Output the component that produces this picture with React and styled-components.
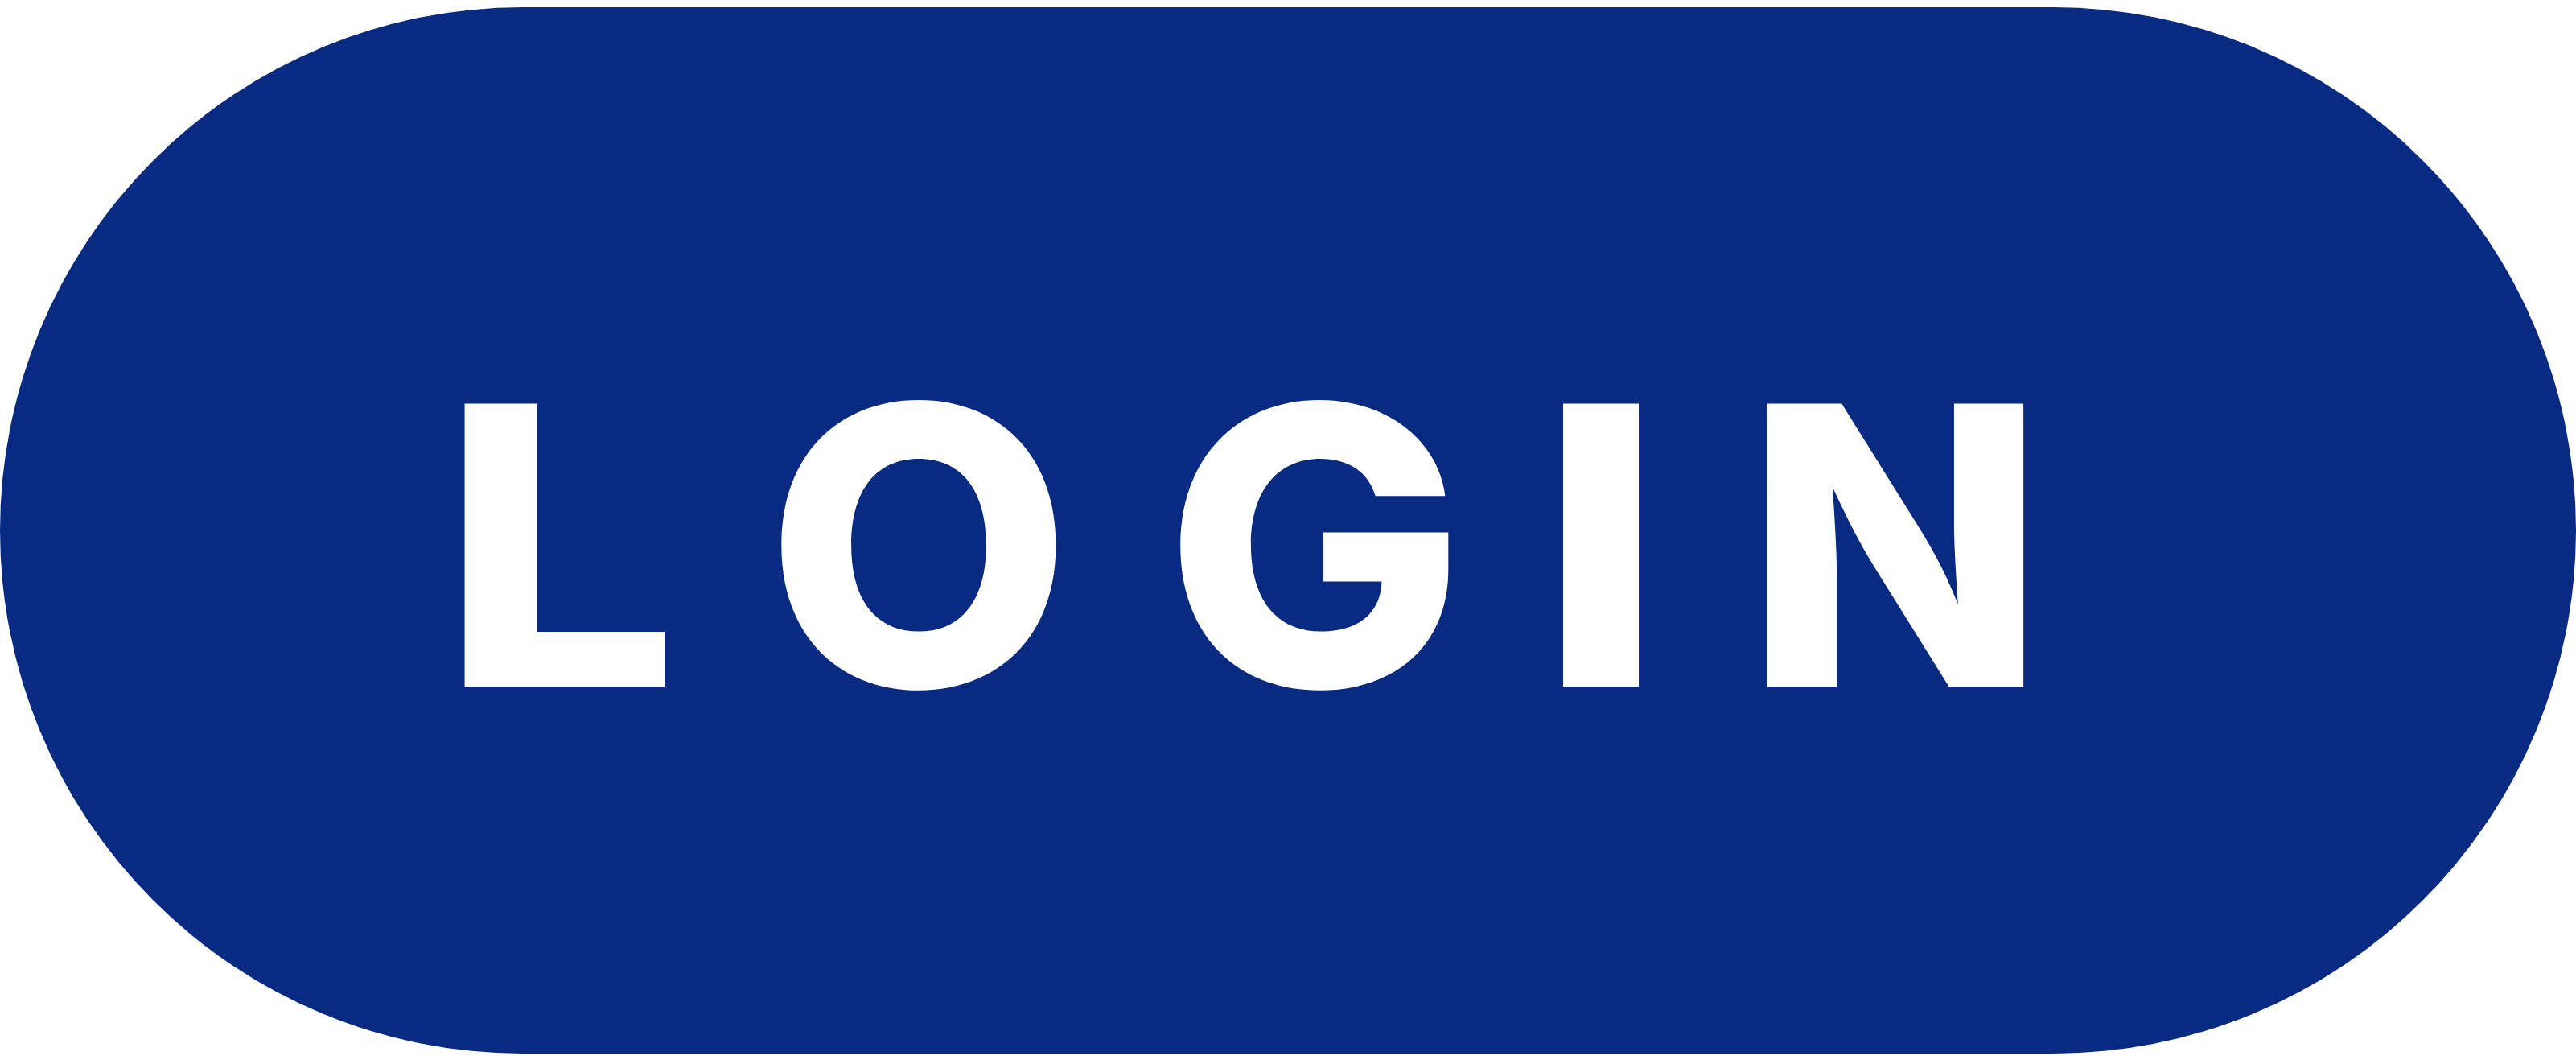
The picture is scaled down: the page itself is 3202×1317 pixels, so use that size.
import React from 'react';
import styled, { createGlobalStyle } from 'styled-components';

const GlobalStyle = createGlobalStyle`
    html, body {
        margin: 0;
        padding: 0;
        background: #ffffff;
    }
    body {
        width: 3202px;
        height: 1317px;
        overflow: hidden;
        font-family: Inter, "Liberation Sans", sans-serif;
    }
`;

const Page = styled.div`
    padding-top: 9px;
`;

const LoginButton = styled.button`
    display: flex;
    align-items: center;
    justify-content: center;
    width: 3202px;
    height: 1300px;
    padding: 37px 106px 0 0;
    margin: 0;
    border: none;
    border-radius: 650px;
    background: #092a81;
    cursor: pointer;
    box-sizing: border-box;
`;

const Word = styled.span`
    display: flex;
    align-items: center;
`;

const Letter = styled.span`
    display: flex;
    justify-content: center;
    width: ${p => p.$w}px;
    margin-left: ${p => p.$gap}px;
    color: #ffffff;
    font-family: Inter, "Liberation Sans", sans-serif;
    font-weight: 800;
    font-size: 483px;
    line-height: 1;
    transform: translateX(${p => p.$dx}px) scaleX(${p => p.$sx});
`;

const letters = [
    { ch: 'L', w: 257, gap: 0, sx: 1.08, dx: -12 },
    { ch: 'O', w: 372, gap: 120, sx: 1.02, dx: 0 },
    { ch: 'G', w: 345, gap: 125, sx: 1.03, dx: 9 },
    { ch: 'I', w: 90, gap: 149, sx: 1.13, dx: -2 },
    { ch: 'N', w: 322, gap: 158, sx: 1.01, dx: 0 },
];

export default function App() {
    return (
        <>
            <GlobalStyle />
            <Page>
                <LoginButton aria-label="LOGIN">
                    <Word>
                        {letters.map((l, index) =>
                            <Letter key={index} $w={l.w} $gap={l.gap} $sx={l.sx} $dx={l.dx}>{l.ch}</Letter>
                        )}
                    </Word>
                </LoginButton>
            </Page>
        </>
    );
}
